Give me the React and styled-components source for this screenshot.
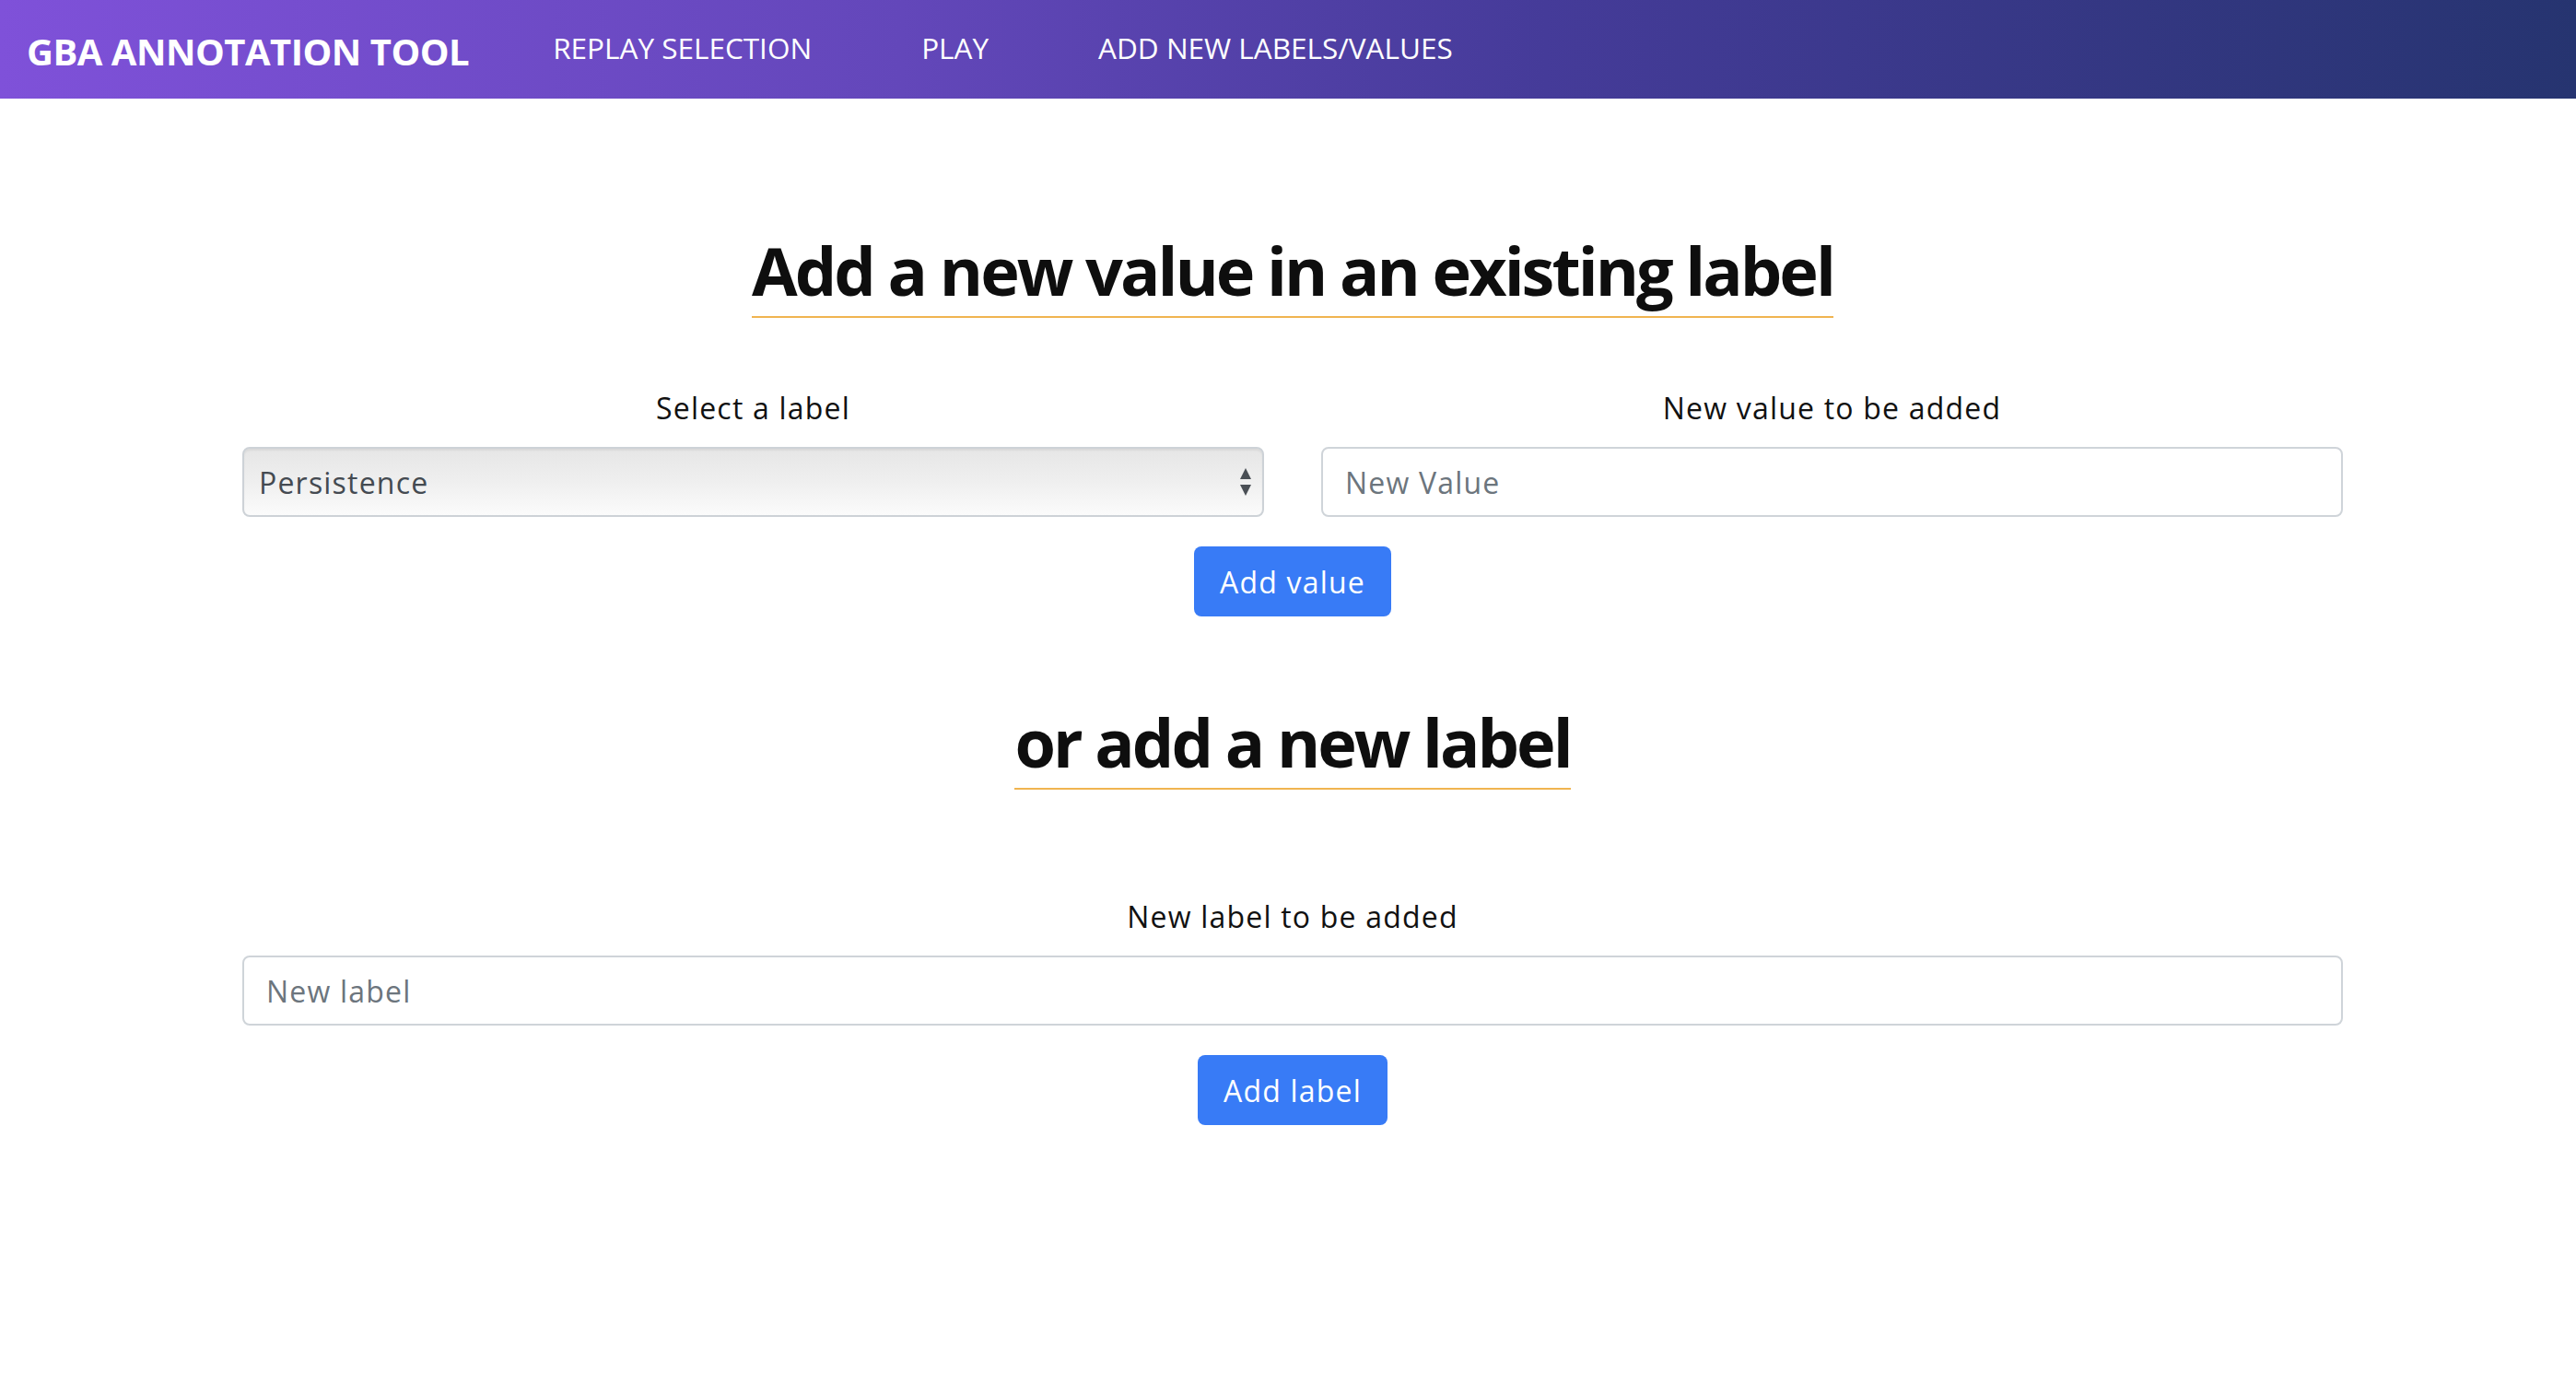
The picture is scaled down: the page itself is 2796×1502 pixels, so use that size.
import React from "react";
import styled, { createGlobalStyle } from "styled-components";

const GlobalStyle = createGlobalStyle`
  body {
    margin: 0;
    background: #ffffff;
    color: #111111;
    font-family: "Open Sans", "DejaVu Sans", sans-serif;
  }
  * { box-sizing: border-box; }
`;

const NavBar = styled.nav`
  height: 107px;
  display: flex;
  align-items: center;
  padding-left: 29px;
  background: linear-gradient(90deg, #7f51d9 0%, #6347ba 35%, #453b99 60%, #263470 100%);
`;

const Brand = styled.a`
  color: #ffffff;
  font-size: 40px;
  font-weight: 700;
  letter-spacing: -0.5px;
  text-transform: uppercase;
  margin-top: 4px;
  margin-right: 91px;
  white-space: nowrap;
`;

const NavLinks = styled.div`
  display: flex;
  align-items: center;
  gap: 119px;
  margin-top: -4px;
`;

const NavLink = styled.a`
  color: #ffffff;
  font-size: 31.5px;
  text-transform: uppercase;
  white-space: nowrap;
`;

const Page = styled.div`
  padding-left: 10px;
`;

const Main = styled.main`
  width: 2280px;
  margin: 0 auto;
  padding-top: 138px;
  display: flex;
  flex-direction: column;
  align-items: center;
`;

const Title = styled.h1`
  margin: ${props => props.$top}px 0 0;
  font-size: 72px;
  line-height: 96px;
  font-weight: 700;
  letter-spacing: -3px;
  padding-bottom: 2px;
  border-bottom: 2px solid #f0b450;
  color: #0e0e0e;
`;

const Grid = styled.div`
  width: 100%;
  margin-top: ${props => props.$top}px;
  display: grid;
  grid-template-columns: repeat(${props => props.$cols}, 1fr);
  column-gap: 62px;
`;

const Field = styled.div`
  display: flex;
  flex-direction: column;
  align-items: stretch;
`;

const Label = styled.label`
  font-size: 32px;
  line-height: 48px;
  letter-spacing: 1.2px;
  text-align: center;
  margin-bottom: 18px;
  color: #111111;
`;

const SelectWrap = styled.div`
  position: relative;
`;

const Select = styled.select`
  appearance: none;
  width: 100%;
  height: 76px;
  padding: 0 60px 0 16px;
  font-family: inherit;
  font-size: 32px;
  letter-spacing: 1.2px;
  color: #444a51;
  border: 2px solid #cdd2d7;
  border-radius: 8px;
  background: linear-gradient(180deg, #e6e6e6 0%, #efefef 50%, #fbfbfb 100%);
  box-shadow: inset 0 2px 2px rgba(0, 0, 0, 0.06);
`;

const Arrows = styled.svg`
  position: absolute;
  right: 12px;
  top: 50%;
  transform: translateY(-50%);
  pointer-events: none;
`;

const Input = styled.input`
  width: 100%;
  height: 76px;
  padding: 0 24px;
  font-family: inherit;
  font-size: 32px;
  letter-spacing: 1.2px;
  color: #495057;
  border: 2px solid #cfd4d9;
  border-radius: 8px;
  background: #ffffff;

  &::placeholder {
    color: #6c757d;
  }
`;

const Button = styled.button`
  margin-top: 32px;
  height: 76px;
  padding: 0 28px;
  font-family: inherit;
  font-size: 32px;
  letter-spacing: 1.2px;
  color: #ffffff;
  background: #387bf6;
  border: none;
  border-radius: 8px;
  cursor: pointer;
`;

export default function App() {
  return (
    <>
      <GlobalStyle />
      <NavBar>
        <Brand>GBA Annotation Tool</Brand>
        <NavLinks>
          <NavLink>Replay selection</NavLink>
          <NavLink>Play</NavLink>
          <NavLink>Add new labels/values</NavLink>
        </NavLinks>
      </NavBar>
      <Page>
        <Main>
          <Title $top={0}>Add a new value in an existing label</Title>
          <Grid $cols={2} $top={74}>
            <Field>
              <Label>Select a label</Label>
              <SelectWrap>
                <Select defaultValue="Persistence">
                  <option>Persistence</option>
                </Select>
                <Arrows width="16" height="34" viewBox="0 0 16 34">
                  <path d="M8 2 L14 14 L2 14 Z" fill="#4a4f55" />
                  <path d="M2 20 L14 20 L8 32 Z" fill="#4a4f55" />
                </Arrows>
              </SelectWrap>
            </Field>
            <Field>
              <Label>New value to be added</Label>
              <Input placeholder="New Value" />
            </Field>
          </Grid>
          <Button>Add value</Button>
          <Title $top={88}>or add a new label</Title>
          <Grid $cols={1} $top={114}>
            <Field>
              <Label>New label to be added</Label>
              <Input placeholder="New label" />
            </Field>
          </Grid>
          <Button>Add label</Button>
        </Main>
      </Page>
    </>
  );
}
